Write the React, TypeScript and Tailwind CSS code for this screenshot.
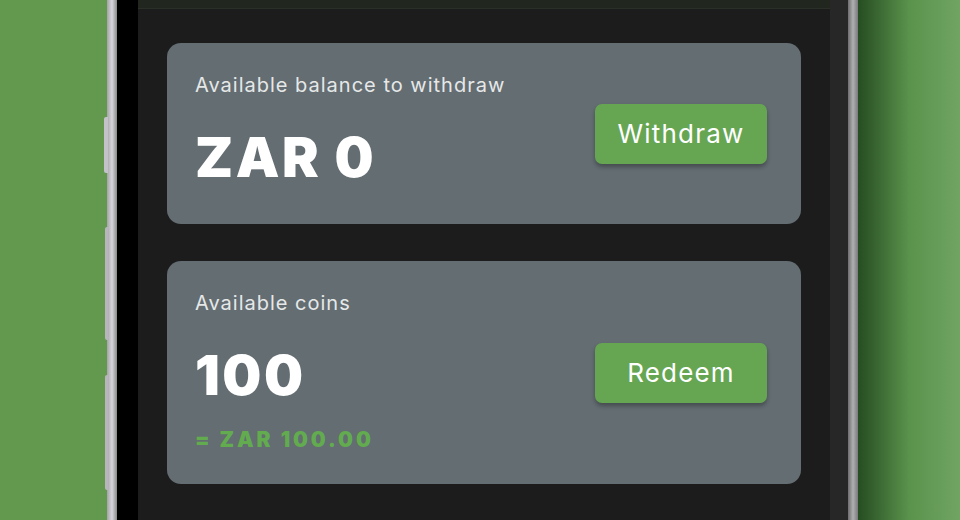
import React from "react"

const font = { fontFamily: "Inter, 'Noto Sans', sans-serif" }

function BalanceCard({
  label,
  amount,
  action,
  sub,
}: {
  label: string
  amount: string
  action: string
  sub?: string
}) {
  return (
    <div className="flex items-center justify-between rounded-[14px] bg-[#636d72] pl-7 pr-[34px]">
      <div className={sub ? "pt-[28px] pb-[30px]" : "pt-[28px] pb-[39px]"}>
        <div className="text-[20px] leading-[28px] tracking-[1px] text-[#e6e8e8]">{label}</div>
        <div className="mt-[31px] text-[55px] font-black leading-[55px] tracking-[2.5px] text-white">
          {amount}
        </div>
        {sub && (
          <div className="mt-[23px] text-[21px] font-black leading-[28px] tracking-[2.9px] text-[#62ab4f]">
            {sub}
          </div>
        )}
      </div>
      <button className="h-[60px] w-[172px] rounded-[7px] bg-[#66a653] text-[26px] tracking-[1.2px] text-white shadow-[0_3px_4px_rgba(0,0,0,0.3)]">
        {action}
      </button>
    </div>
  )
}

export default function App() {
  return (
    <div
      className="relative flex h-[520px] w-[960px] overflow-hidden bg-[#62984f]"
      style={font}
    >
      <div className="w-[107px] shrink-0 bg-[#63994f]" />

      {/* phone frame */}
      <div className="flex shrink-0">
        <div className="w-[10px] bg-gradient-to-r from-[#a4a4a8] via-[#d8d6dc] to-[#8a8a8c]" />
        <div className="w-[21px] bg-black" />
        <div className="flex w-[692px] flex-col bg-[#1c1c1c]">
          <div className="h-[9px] border-b border-[#2a3028] bg-[#21261f]" />
          <div className="flex flex-col gap-[37px] px-[29px] pt-[34px]">
            <BalanceCard label="Available balance to withdraw" amount="ZAR 0" action="Withdraw" />
            <BalanceCard
              label="Available coins"
              amount="100"
              action="Redeem"
              sub="= ZAR 100.00"
            />
          </div>
        </div>
        <div className="w-[18px] bg-[#272727]" />
        <div className="w-[10px] bg-gradient-to-r from-[#6e6e70] via-[#b0b0b2] to-[#7a7a7c]" />
      </div>

      <div className="flex-1 bg-gradient-to-r from-[#274d22] via-[#5a934c] to-[#70a463]" />

      {/* side buttons */}
      <div className="absolute left-[104px] top-[117px] h-[56px] w-[4px] rounded-l-[2px] bg-[#c4c2c8]" />
      <div className="absolute left-[105px] top-[227px] h-[113px] w-[3px] rounded-l-[2px] bg-[#b8b6bc]" />
      <div className="absolute left-[105px] top-[375px] h-[115px] w-[3px] rounded-l-[2px] bg-[#b8b6bc]" />
    </div>
  )
}
